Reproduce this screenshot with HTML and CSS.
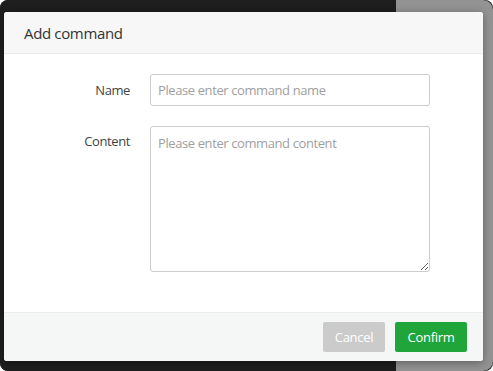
FILE: index.html
```html
<!DOCTYPE html>
<html>
<head>
<meta charset="utf-8">
<link rel="stylesheet" href="styles.css">
</head>
<body>
<div class="desk">
  <div class="desk-main"></div>
  <div class="desk-side"></div>
  <div class="dialog">
    <div class="dialog-head">Add command</div>
    <div class="dialog-body">
      <div class="row">
        <label class="label">Name</label>
        <input class="input" type="text" placeholder="Please enter command name">
      </div>
      <div class="row row-top">
        <label class="label label-top">Content</label>
        <textarea class="textarea" placeholder="Please enter command content"></textarea>
      </div>
    </div>
    <div class="dialog-foot">
      <button class="btn btn-cancel">Cancel</button>
      <button class="btn btn-confirm">Confirm</button>
    </div>
  </div>
</div>
</body>
</html>
```
FILE: styles.css
```css
* { box-sizing: border-box; }
html, body { margin: 0; padding: 0; background: #ffffff; }
body { width: 493px; height: 371px; overflow: hidden; font-family: "Open Sans", "Noto Sans", sans-serif; }
.desk {
  position: relative;
  width: 493px;
  height: 371px;
  display: flex;
  border-radius: 8px;
  overflow: hidden;
  background: #1e1e1e;
}
.desk-main { flex: 1; background: #1e1e1e; }
.desk-side { width: 97px; background: #939393; border-radius: 0 10px 10px 0; }
.dialog {
  position: absolute;
  left: 4px;
  top: 12px;
  width: 479px;
  height: 349px;
  background: #fff;
  border-radius: 3px;
  box-shadow: 0 2px 8px rgba(0,0,0,0.35);
  display: flex;
  flex-direction: column;
  overflow: hidden;
}
.dialog-head {
  height: 42px;
  background: #f7f7f7;
  border-bottom: 1px solid #ebebeb;
  padding-left: 20px;
  display: flex;
  align-items: center;
  font-size: 15px;
  letter-spacing: -0.35px;
  color: #333;
}
.dialog-body { flex: 1; padding-top: 20px; }
.row { display: flex; align-items: center; margin-bottom: 20px; }
.row-top { align-items: flex-start; }
.label {
  width: 126px;
  text-align: right;
  font-size: 13px;
  letter-spacing: -0.4px;
  color: #444;
  margin-right: 20px;
}
.label-top { padding-top: 6px; }
.input, .textarea {
  width: 280px;
  border: 1px solid #cccccc;
  border-radius: 3px;
  font-family: inherit;
  font-size: 13px;
  letter-spacing: -0.4px;
  color: #333;
  padding: 0 7px;
  outline: none;
}
.input { height: 32px; }
.textarea { height: 146px; padding-top: 7px; resize: vertical; }
.input::placeholder, .textarea::placeholder { color: #a0a0a0; }
.dialog-foot {
  height: 49px;
  background: #f5f6f6;
  border-top: 1px solid #ebebeb;
  display: flex;
  align-items: center;
  justify-content: flex-end;
  padding-right: 16px;
  gap: 10px;
}
.btn {
  height: 30px;
  border: none;
  border-radius: 2px;
  color: #fff;
  font-family: inherit;
  font-size: 13px;
  letter-spacing: -0.3px;
  padding: 0;
}
.btn-cancel { width: 62px; background: #cbcbcb; }
.btn-confirm { width: 72px; background: #20a53a; }
```
